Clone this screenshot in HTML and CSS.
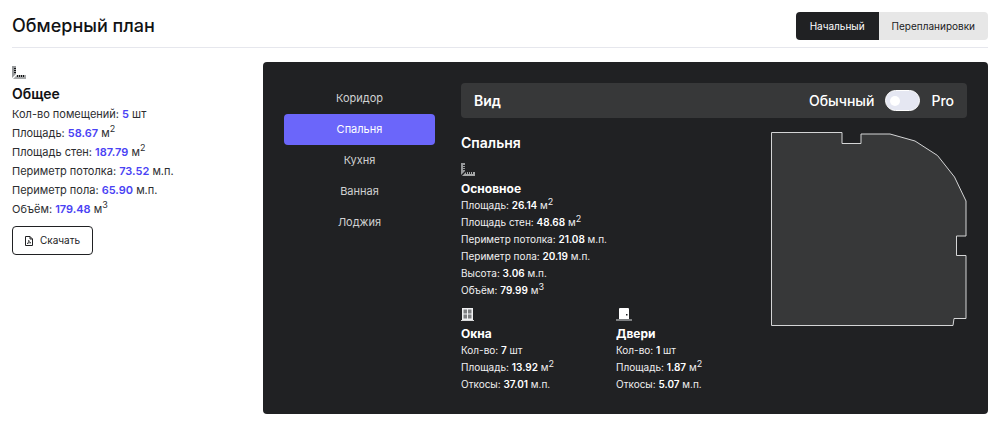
FILE: index.html
```html
<!DOCTYPE html>
<html lang="ru">
<head>
<meta charset="utf-8">
<meta name="viewport" content="width=device-width, initial-scale=1">
<title>Обмерный план</title>
<link rel="stylesheet" href="styles.css">
</head>
<body>
<svg class="sprite" aria-hidden="true">
  <symbol id="ruler" viewBox="0 0 14 13">
    <path d="M0 0h4v8L0 12z" fill="#97999b"/>
    <path d="M1 13l4-4h9v4z" fill="#a5a7a8"/>
    <path d="M2 2.500h2M2 4.500h2M2 6.500h2M5.500 9v2M7.500 9v2M9.500 9v2M11.500 9v2" stroke="currentColor"/>
  </symbol>
</svg>
<header class="header">
  <h1 class="title">Обмерный план</h1>
  <div class="tabs">
    <button class="tab tab-active" type="button">Начальный</button>
    <button class="tab" type="button">Перепланировки</button>
  </div>
</header>
<main class="layout">
  <aside class="summary">
    <svg class="icon"><use href="#ruler"/></svg>
    <h2 class="summary-title">Общее</h2>
    <ul class="summary-list">
      <li>Кол-во помещений: <b>5</b> шт</li>
      <li>Площадь: <b>58.67</b> м<sup>2</sup></li>
      <li>Площадь стен: <b>187.79</b> м<sup>2</sup></li>
      <li>Периметр потолка: <b>73.52</b> м.п.</li>
      <li>Периметр пола: <b>65.90</b> м.п.</li>
      <li>Объём: <b>179.48</b> м<sup>3</sup></li>
    </ul>
    <button class="download" type="button">
      <svg width="8" height="10" viewBox="0 0 8 10" fill="none" stroke="currentColor"><path d="M.5.500h4.500l2.500 2.500v6.500h-7zM5 .500V3h2.500"/><path d="M2 7.800C3.500 7 3.900 5.500 3.700 4.200c.3 1.600 1 2.400 2.300 2.600C4.500 6.600 3 7 2 7.800z" stroke-width=".7"/></svg>
      Скачать
    </button>
  </aside>
  <section class="panel">
    <nav class="rooms">
      <button class="room" type="button">Коридор</button>
      <button class="room room-active" type="button">Спальня</button>
      <button class="room" type="button">Кухня</button>
      <button class="room" type="button">Ванная</button>
      <button class="room" type="button">Лоджия</button>
    </nav>
    <div class="content">
      <div class="view-bar">
        <span class="view-name">Вид</span>
        <label class="mode"><span>Обычный</span><input class="switch" type="checkbox" role="switch"><span>Pro</span></label>
      </div>
      <div class="details">
        <div class="facts">
          <h2 class="room-title">Спальня</h2>
          <section class="group">
            <svg class="icon icon-dim"><use href="#ruler"/></svg>
            <h3 class="group-title">Основное</h3>
            <ul class="group-list">
              <li>Площадь: <b>26.14</b> м<sup>2</sup></li>
              <li>Площадь стен: <b>48.68</b> м<sup>2</sup></li>
              <li>Периметр потолка: <b>21.08</b> м.п.</li>
              <li>Периметр пола: <b>20.19</b> м.п.</li>
              <li>Высота: <b>3.06</b> м.п.</li>
              <li>Объём: <b>79.99</b> м<sup>3</sup></li>
            </ul>
          </section>
          <div class="openings">
            <section class="group">
              <svg class="icon" viewBox="0 0 14 13"><path d="M1 0h11v12H1z" fill="#f0f1f2"/><path d="M2.500 1.500H6v4H2.500zM7 1.500h3.500v4H7zM2.500 6.500H6v4H2.500zM7 6.500h3.500v4H7z" fill="#7d7f81"/><path d="M0 12h13v1H0z" fill="#d8d9da"/></svg>
              <h3 class="group-title">Окна</h3>
              <ul class="group-list">
                <li>Кол-во: <b>7</b> шт</li>
                <li>Площадь: <b>13.92</b> м<sup>2</sup></li>
                <li>Откосы: <b>37.01</b> м.п.</li>
              </ul>
            </section>
            <section class="group">
              <svg class="icon icon-door" viewBox="0 0 16 13"><path d="M3 11V1q0-1 1-1h8q1 0 1 1v10z" fill="#fff"/><path d="M10 6h1.500v1.500H10z" fill="#202123"/><path d="M0 11h16v2H0z" fill="#7d7f81"/></svg>
              <h3 class="group-title">Двери</h3>
              <ul class="group-list">
                <li>Кол-во: <b>1</b> шт</li>
                <li>Площадь: <b>1.87</b> м<sup>2</sup></li>
                <li>Откосы: <b>5.07</b> м.п.</li>
              </ul>
            </section>
          </div>
        </div>
        <svg class="plan" viewBox="0 0 196 195" role="img" aria-label="План комнаты"><path d="M.5.500h70.500v11h19v-9.500h29l25 7 22.500 14.500 17 21.500 11.500 24v35h-9.500v19.500h9.500v63h-12l-1 7H.5z"/></svg>
      </div>
    </div>
  </section>
</main>
</body>
</html>
```

FILE: styles.css
```css
* { box-sizing: border-box; }
body {
  margin: 0;
  padding: 12px;
  background: #fff;
  color: #111214;
  font-family: Inter, "Liberation Sans", sans-serif;
}
h1, h2, h3, ul { margin: 0; padding: 0; }
ul { list-style: none; }
button { font: inherit; cursor: pointer; }
sup { font-size: 9px; line-height: 0; }
.sprite { display: none; }
.icon { display: block; width: 14px; height: 13px; }
.icon-door { width: 16px; }
.icon-dim { color: #202123; }

.header {
  display: flex;
  justify-content: space-between;
  align-items: center;
  padding-bottom: 7px;
  border-bottom: 1px solid #e6e7ed;
}
.title { font-size: 18px; line-height: 24px; font-weight: 500; }
.tabs { display: flex; border-radius: 4px; overflow: hidden; }
.tab {
  border: 0;
  padding: 0 13px;
  background: #e7e7e7;
  color: #202123;
  font-size: 10px;
  line-height: 28px;
  font-weight: 400;
}
.tab-active { padding: 0 14px; background: #202123; color: #fff; }

.layout {
  display: grid;
  grid-template-columns: 251px 1fr;
  padding-top: 14px;
}
.summary { padding-top: 4px; }
.summary-title { margin-top: 5px; font-size: 14px; line-height: 20px; font-weight: 600; }
.summary-list { padding-top: 1px; color: #2c2d30; font-size: 11px; line-height: 19px; font-weight: 400; }
.summary-list b { color: #4a42f4; font-weight: 600; }
.download {
  display: flex;
  align-items: center;
  gap: 7px;
  margin-top: 7px;
  padding: 0 12px;
  border: 1px solid #202123;
  border-radius: 4px;
  background: #fff;
  color: #202123;
  font-size: 10px;
  line-height: 27px;
  font-weight: 400;
}

.panel {
  display: grid;
  grid-template-columns: 151px 1fr;
  gap: 26px;
  align-items: start;
  padding: 21px;
  border-radius: 4px;
  background: #202123;
  color: #fff;
}
.rooms { display: grid; }
.room {
  border: 0;
  border-radius: 4px;
  padding: 0;
  background: none;
  color: #d0d1d2;
  font-size: 11px;
  line-height: 31px;
  font-weight: 400;
}
.room-active { background: #6b66fa; color: #fff; }

.view-bar {
  display: flex;
  justify-content: space-between;
  align-items: center;
  height: 35px;
  padding: 0 13px;
  border-radius: 4px;
  background: #373839;
  font-size: 14px;
}
.view-name { font-weight: 600; }
.mode { display: flex; align-items: center; gap: 11px; font-weight: 500; }
.switch {
  appearance: none;
  width: 35px;
  height: 21px;
  margin: 0;
  padding: 5px 4px;
  border: 1px solid #fff;
  border-radius: 11px;
  background: #e5e7f2;
}
.switch::before {
  content: "";
  display: block;
  width: 10px;
  height: 10px;
  border-radius: 50%;
  background: #fff;
}
.switch:checked::before { margin-left: auto; }

.details { display: flex; justify-content: space-between; align-items: flex-start; padding-top: 14px; }
.room-title { margin-top: 1px; font-size: 14px; line-height: 20px; font-weight: 600; }
.group { padding-top: 10px; }
.group-title { margin-top: 4px; font-size: 12px; line-height: 17px; font-weight: 700; }
.group-list { color: #f0f0f1; font-size: 10px; line-height: 17px; font-weight: 400; }
.group-list b { color: #fff; font-weight: 600; }
.openings { display: grid; grid-template-columns: 155px 1fr; }
.openings .group { padding-top: 9px; }
.plan {
  width: 196px;
  height: 195px;
  fill: #373839;
  stroke: #d4d5d6;
}
```
